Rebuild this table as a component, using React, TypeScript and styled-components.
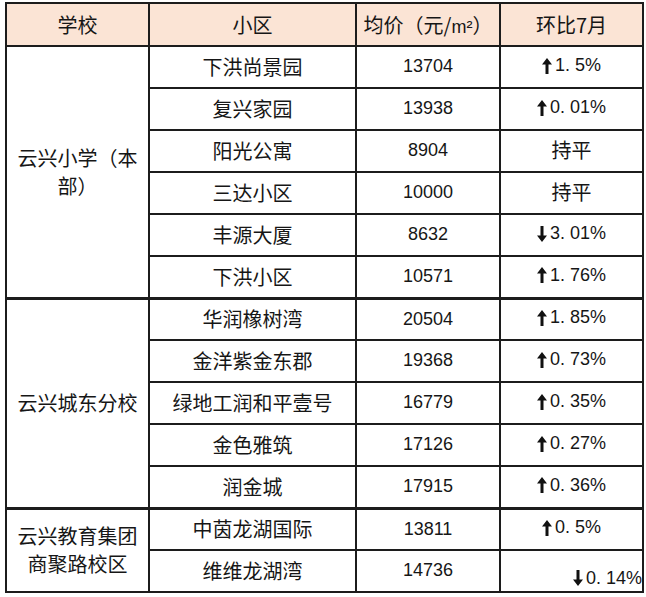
import React from 'react';
import styled, {createGlobalStyle} from 'styled-components';

const GlobalStyle = createGlobalStyle`
  html, body {
    margin: 0;
    padding: 0;
    background: #ffffff;
  }
  body {
    font-family: "Liberation Sans", "Noto Sans CJK SC", sans-serif;
    color: #161616;
  }
`;

const Page = styled.div`
  padding: 2px 0 0 5px;
`;

const Table = styled.table`
  border-collapse: collapse;
  table-layout: fixed;
  width: 637px;
`;

const HeadCell = styled.th<{w: number}>`
  width: ${(p) => p.w - 2}px;
  height: 41px;
  background: #fbe4d5;
  border: 2px solid #1c1c1c;
  font-family: "Noto Sans CJK SC", sans-serif;
  font-weight: 400;
  font-size: 20px;
  text-align: center;
  padding: 0;
`;

const Unit = styled.span`
  font-family: "Liberation Sans", sans-serif;
  font-size: 18px;
`;

const Row = styled.tr<{groupStart?: boolean}>`
  height: 42px;
  & > td {
    border-top-width: ${(p) => (p.groupStart ? '3px' : '2px')};
  }
`;

const Cell = styled.td<{num?: boolean}>`
  border: 2px solid #1c1c1c;
  padding: 0;
  text-align: center;
  vertical-align: middle;
  overflow: visible;
  white-space: nowrap;
  font-family: ${(p) =>
    p.num ? '"Liberation Sans", sans-serif' : '"Noto Sans CJK SC", sans-serif'};
  font-size: ${(p) => (p.num ? '18px' : '20px')};
  line-height: 1.4;
`;

const SchoolCell = styled(Cell)`
  padding: 0 4px;
  line-height: 28px;
`;

const ChangeCell = styled(Cell)<{corner?: boolean}>`
  font-family: "Liberation Sans", sans-serif;
  font-size: 18px;
  ${(p) =>
    p.corner &&
    `
    text-align: right;
    vertical-align: bottom;
    line-height: 22px;
  `}
`;

const Change = styled.span`
  display: inline-flex;
  align-items: center;
  gap: 3px;
`;

const Arrow = styled.svg`
  width: 10px;
  height: 16px;
  fill: #111111;
`;

const Flat = styled.span`
  font-family: "Noto Sans CJK SC", sans-serif;
  font-size: 20px;
`;

type Item = {name: string; price: string; dir?: 'up' | 'down'; pct?: string};

const groups: {school: React.ReactNode; items: Item[]}[] = [
  {
    school: (
      <>
        云兴小学（本
        <br />
        部）
      </>
    ),
    items: [
      {name: '下洪尚景园', price: '13704', dir: 'up', pct: '1. 5%'},
      {name: '复兴家园', price: '13938', dir: 'up', pct: '0. 01%'},
      {name: '阳光公寓', price: '8904'},
      {name: '三达小区', price: '10000'},
      {name: '丰源大厦', price: '8632', dir: 'down', pct: '3. 01%'},
      {name: '下洪小区', price: '10571', dir: 'up', pct: '1. 76%'},
    ],
  },
  {
    school: '云兴城东分校',
    items: [
      {name: '华润橡树湾', price: '20504', dir: 'up', pct: '1. 85%'},
      {name: '金洋紫金东郡', price: '19368', dir: 'up', pct: '0. 73%'},
      {name: '绿地工润和平壹号', price: '16779', dir: 'up', pct: '0. 35%'},
      {name: '金色雅筑', price: '17126', dir: 'up', pct: '0. 27%'},
      {name: '润金城', price: '17915', dir: 'up', pct: '0. 36%'},
    ],
  },
  {
    school: (
      <>
        云兴教育集团
        <br />
        商聚路校区
      </>
    ),
    items: [
      {name: '中茵龙湖国际', price: '13811', dir: 'up', pct: '0. 5%'},
      {name: '维维龙湖湾', price: '14736', dir: 'down', pct: '0. 14%'},
    ],
  },
];

const ArrowIcon = ({dir}: {dir: 'up' | 'down'}) => (
  <Arrow viewBox="0 0 10 16">
    {dir === 'up' ? (
      <path d="M5 0 L10 6.5 H6.5 V16 H3.5 V6.5 H0 Z" />
    ) : (
      <path d="M5 16 L10 9.5 H6.5 V0 H3.5 V9.5 H0 Z" />
    )}
  </Arrow>
);

const App = () => {
  return (
    <Page>
      <GlobalStyle />
      <Table>
        <thead>
          <tr>
            <HeadCell w={143}>学校</HeadCell>
            <HeadCell w={207}>小区</HeadCell>
            <HeadCell w={144}>
              均价（元/<Unit>m²</Unit>）
            </HeadCell>
            <HeadCell w={143}>环比7月</HeadCell>
          </tr>
        </thead>
        <tbody>
          {groups.map((g, gi) =>
            g.items.map((it, i) => {
              const last = gi === groups.length - 1 && i === g.items.length - 1;
              return (
                <Row key={it.name} groupStart={i === 0 && gi > 0}>
                  {i === 0 && <SchoolCell rowSpan={g.items.length}>{g.school}</SchoolCell>}
                  <Cell>{it.name}</Cell>
                  <Cell num>{it.price}</Cell>
                  <ChangeCell corner={last}>
                    {it.dir ? (
                      <Change>
                        <ArrowIcon dir={it.dir} />
                        {it.pct}
                      </Change>
                    ) : (
                      <Flat>持平</Flat>
                    )}
                  </ChangeCell>
                </Row>
              );
            })
          )}
        </tbody>
      </Table>
    </Page>
  );
};

export default App;
